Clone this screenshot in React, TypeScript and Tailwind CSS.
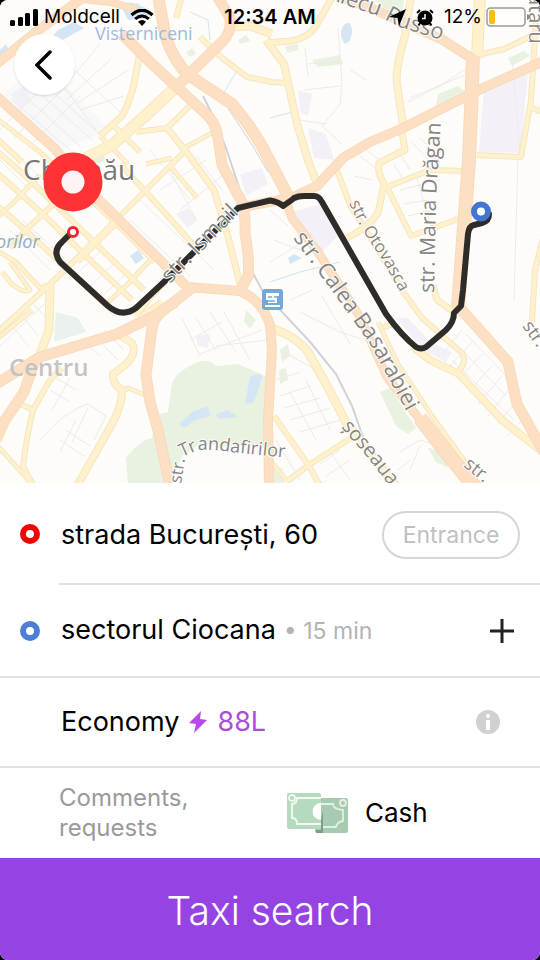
import type { ReactNode } from 'react';

/* ---------- map data ---------- */

type Road = { d: string; w: number };

const primaryRoads: Road[] = [
  { d: 'M-6 66 L36 32 L77 2 L86 -6', w: 9 },
  { d: 'M72 -2 L110 2 L138 10', w: 7 },
  { d: 'M122 34 L150 62 L180 90 L204 112 Q216 122 218 138 L222 165 L238 195 Q246 205 245 233 Q250 262 248 276 L240 291', w: 10 },
  { d: 'M158 -4 L163 22 Q166 50 187 74 L232 104 Q248 122 263 148 L288 196', w: 11 },
  { d: 'M217 -4 L230 18 Q232 32 222 42 L177 86', w: 10 },
  { d: 'M-4 96 L55 149 L97 198 L160 260 L187 287 L240 291 Q262 300 270 325 L272 350 L268 420 L269 486', w: 9 },
  { d: 'M192 288 L160 313 L117 334 L40 357 L-4 384', w: 10 },
  { d: 'M36 358 L24 392 L4 422 L-4 440', w: 10 },
  { d: 'M176 302 Q155 312 152 328 L146 375 L150 402 L158 430 L170 486', w: 10 },
  { d: 'M284 196 L292 218 L318 252 L360 317 L387 377 L420 420 L443 450 L478 486', w: 8 },
  { d: 'M420 418 L443 448 L474 486', w: 14 },
  { d: 'M473 56 L471 110 L469 160 L458 308', w: 13 },
  { d: 'M458 306 L478 328 L508 362 Q512 382 517 404 L544 452', w: 10 },
  { d: 'M334 -6 L380 12 L443 40 L474 60', w: 9 },
  { d: 'M546 60 L483 88 L403 128 L370 142 L343 158 L317 186 L291 198 L243 207', w: 9 },
];

const secondaryRoads: Road[] = [
  { d: 'M175 88 L145 116 L112 145 L86 158', w: 11 },
  { d: 'M480 -4 L477 58', w: 11 },
  { d: 'M231 27 L250 26 L272 34', w: 8 },
  { d: 'M200 37 L222 58 L247 77 L272 82 L288 83', w: 5 },
  { d: 'M266 43 L290 41 Q310 38 317 24 L333 -4', w: 6 },
  { d: 'M182 -4 L176 18', w: 5 },
  { d: 'M266 40 L284 64 L297 124 L308 160 L317 184', w: 7 },
  { d: 'M411 -4 L405 36 Q395 70 397 84 L403 125', w: 7 },
  { d: 'M402 132 L405 150 L379 163 Q377 172 384 184 L378 213 Q368 228 347 238', w: 6 },
  { d: 'M387 187 L430 170 L464 171', w: 5 },
  { d: 'M387 187 L411 236 L458 219', w: 5 },
  { d: 'M337 170 L350 205 L378 250 L404 293 L422 318 L462 353 Q468 362 457 373', w: 5 },
  { d: 'M433 285 L437 300 L454 312', w: 6 },
  { d: 'M383 327 L394 324', w: 5 },
  { d: 'M412 346 L430 360 L459 374 L503 421 L544 453', w: 7 },
  { d: 'M378 322 L398 364 L432 416 L474 474', w: 4 },
  { d: 'M270 328 Q295 335 308 352 L326 384 L347 424 L396 486', w: 8 },
  { d: 'M274 416 L309 466 L320 486', w: 5 },
  { d: 'M286 482 L309 465 L351 438', w: 5 },
  { d: 'M270 460 L286 480', w: 4 },
  { d: 'M482 54 L504 49 L544 30', w: 5 },
  { d: 'M536 20 L531 100 L521 157 L477 155', w: 5 },
  { d: 'M530 107 L544 113', w: 5 },
  { d: 'M544 234 L535 270 L532 322', w: 5 },
  { d: 'M140 53 L133 88 Q128 106 122 116 L100 136', w: 6 },
  { d: 'M-4 138 L22 162', w: 5 },
  { d: 'M100 136 L128 164', w: 4 },
  { d: 'M112 124 L140 152', w: 5 },
  { d: 'M136 132 L167 128 L192 104', w: 5 },
  { d: 'M167 128 L188 154 L214 190 L227 233 L240 284', w: 6 },
  { d: 'M184 148 L212 133', w: 4 },
  { d: 'M186 150 L133 203 L84 252 L50 284 L-4 334', w: 5 },
  { d: 'M146 164 L172 158', w: 4 },
  { d: 'M184 152 L170 166 L197 198', w: 4 },
  { d: 'M120 164 L156 203 L198 250', w: 5 },
  { d: 'M-4 118 L40 152 L118 226 L154 262', w: 4 },
  { d: 'M-4 150 L30 180 L100 248 L144 290', w: 5 },
  { d: 'M-4 172 L44 215 L92 262 L132 300', w: 5 },
  { d: 'M-4 205 L12 218 L60 262 L114 312', w: 5 },
  { d: 'M40 175 L14 202 L-4 218', w: 4 },
  { d: 'M62 196 L30 226 L10 248', w: 5 },
  { d: 'M118 222 L96 244 L78 262', w: 4 },
  { d: 'M152 258 L128 284 L106 304', w: 4 },
  { d: 'M172 274 L150 298 L136 316', w: 5 },
  { d: 'M-4 250 L16 262 L40 288 L50 284', w: 4 },
  { d: 'M10 262 L30 290 Q24 294 12 284 L2 272', w: 4 },
  { d: 'M50 284 L49 330 L40 354', w: 8 },
  { d: 'M32 310 L-4 340', w: 4 },
  { d: 'M142 316 L162 302', w: 6 },
  { d: 'M117 333 L132 343 Q138 354 124 366 L113 374 Q112 384 122 390 Q122 406 112 424 L77 486', w: 7 },
  { d: 'M123 391 L128 388 L145 395', w: 4 },
  { d: 'M62 368 L50 380 L33 410 Q26 440 23 467 L34 486', w: 5 },
  { d: 'M20 404 L34 410', w: 5 },
  { d: 'M-4 444 L34 486', w: 4 },
];

const minorRoads = [
  'M60 92 L100 44 M66 100 L110 60 M76 104 L128 70 M80 110 L124 96 M70 66 L120 112 M62 84 L96 130',
  'M12 100 L70 150 M20 92 L80 146 M30 84 L92 140 M40 80 L104 138 M0 130 L60 70 M14 138 L68 84 M28 148 L80 96',
  'M0 160 L30 190 M22 160 L70 205 M150 150 L190 200 M196 156 L222 190 M160 190 L206 160 M180 210 L222 176 M170 170 L196 220 M140 200 L214 270 M130 220 L190 276',
  'M10 230 L50 270 M22 220 L64 258 M70 280 L104 248 M84 292 L118 260 M96 302 L130 270 M60 272 L90 240',
  'M0 326 L40 290 M0 346 L44 304 M8 320 L28 346 M18 310 L38 336 M30 300 L46 318 M84 342 L100 356 M96 338 L118 360 M104 330 L124 350',
  'M56 378 L76 390 M50 390 L70 402 M70 378 L52 410 M40 440 Q66 410 88 404 M88 404 L106 416 L94 440 M60 440 L84 456 M66 430 L90 446 M76 420 L60 452 M88 408 L72 442',
  'M182 318 L200 356 M196 318 L216 350 M210 312 L236 352 M224 312 L250 360 M190 340 L222 322 M200 354 L262 330 M216 346 L268 340',
  'M276 380 L300 372 M280 396 L310 386 M284 408 L320 398 M290 420 L330 408 M300 432 L340 420 M290 392 L316 440 M306 380 L330 430 M280 350 L320 372 M276 440 L300 480',
  'M320 464 L340 450 M326 476 L350 460 M330 452 L350 480',
  'M305 48 L308 76 M338 28 L342 84 L340 104 L322 126 L342 144 M350 70 L366 80 M304 90 L340 86 M300 120 L326 124 M308 64 L340 62',
  'M408 102 L440 86 L470 66 M410 98 L472 72 M396 148 L410 170 M412 142 L434 166 M420 138 L438 156 M354 176 L372 180 M360 156 L378 170 M366 150 L380 160',
  'M400 190 L440 180 M404 204 L428 200 M408 216 L432 210 M394 164 L402 178 M416 176 L430 222 M518 158 L514 300 M512 60 L520 150',
  'M270 262 L310 238 M290 300 L312 290 M300 312 L340 332 L366 340 M322 296 L350 344 M270 210 L288 226 M274 240 L300 250',
  'M462 330 L444 352 M472 342 L450 366 M482 354 L458 380 M492 366 L468 392 M502 376 L478 404 M510 388 L488 416 M514 404 L498 424 M524 418 L508 436 M466 334 L510 380 M458 346 L506 396 M452 360 L514 420',
  'M400 452 L420 440 L440 446 M410 460 L398 470 M420 446 L410 470',
];

const parks = [
  'M172 384 Q176 372 190 366 Q206 356 216 366 L238 364 L270 378 L268 448 L200 444 L182 456 L170 486 L128 486 L126 458 Q140 440 152 438 L160 414 L168 412 Z',
  'M246 310 L256 320 L250 328 L244 322 Z',
  'M312 60 L340 55 L343 64 L318 67 Z',
  'M285 46 L298 44 L298 50 L287 53 Z',
  'M412 122 L436 106 L438 94 L458 86 L466 92 L440 104 Z',
  'M508 58 L524 51 L530 56 L512 66 Z',
  'M380 392 L390 388 L416 428 L408 434 L396 426 Z',
  'M280 350 L288 344 L290 356 L282 362 Z M279 370 L286 368 L288 380 L280 384 Z',
  'M270 470 L282 468 L284 483 L272 483 Z',
  'M428 448 L444 452 L448 468 L436 462 Z',
  'M186 52 L192 48 L196 54 L190 57 Z M238 40 L246 35 L250 41 L240 44 Z',
  'M88 156 L102 150 L106 160 L94 166 Z',
  'M374 0 L404 0 L402 14 L384 8 Z',
];

const blocks = [
  'M484 88 L528 74 L520 153 L479 152 Z',
  'M298 90 L312 94 L308 116 L300 112 Z M308 128 L326 134 L334 160 L314 158 Z',
  'M292 212 L322 204 L342 232 L322 252 Z',
  'M176 214 L188 208 L198 220 L188 228 Z M240 174 L262 168 L268 184 L246 196 Z',
  'M396 318 L408 318 L430 342 L452 352 L446 362 L424 350 Z',
  'M10 94 L24 86 L32 100 L20 110 Z M196 336 L210 334 L208 348 L198 346 Z',
];

const water = [
  'M250 376 L261 374 L262 378 L254 402 L245 404 Z',
  'M179 424 L192 412 L208 406 L210 416 L196 420 L184 428 Z',
  'M216 414 L228 410 L238 417 L218 419 Z',
  'M343 26 Q350 18 352 30 Q352 42 345 44 Q338 36 343 26 Z',
  'M288 258 L294 254 L302 258 L290 264 Z',
  'M0 50 L6 44 L10 52 L0 60 Z',
  'M58 30 L74 22 L84 28 L52 46 L44 46 Z',
  'M130 256 L138 250 L144 258 L136 264 Z',
  'M122 8 L130 2 L146 8 L150 18 L128 20 Z',
];

type LabelProps = { path: string; id: string; size: number; children: ReactNode };

function StreetLabel({ path, id, size, children }: LabelProps) {
  return (
    <>
      <path id={id} d={path} fill="none" />
      <text
        fontSize={size}
        fill="#858585"
        stroke="#fffdfa"
        strokeWidth={2}
        strokeLinejoin="round"
        paintOrder="stroke"
      >
        <textPath href={'#' + id}>{children}</textPath>
      </text>
    </>
  );
}

function RouteMap() {
  return (
    <svg
      viewBox="0 0 540 483"
      preserveAspectRatio="xMidYMid slice"
      className="absolute inset-0 h-full w-full font-['Open_Sans','Noto_Sans',sans-serif]"
      role="img"
      aria-label="Route map"
    >
      <rect width="540" height="483" fill="#fefcf9" />
      <path d="M-2 100 L40 60 L110 130 L60 150 Z" fill="#f9f8f8" />
      <path d="M56 312 L78 318 L86 332 L54 342 Z" fill="#eaf1ee" />
      {parks.map((d) => (
        <path key={d} d={d} fill="#e9f2e0" />
      ))}
      {blocks.map((d) => (
        <path key={d} d={d} fill="#f3f1f7" />
      ))}
      {water.map((d) => (
        <path key={d} d={d} fill="#d5e5f5" />
      ))}
      <g fill="none" stroke="#ebebeb" strokeWidth={1}>
        {minorRoads.map((d) => (
          <path key={d} d={d} />
        ))}
      </g>
      <g fill="none" stroke="#d4e3ee" strokeWidth={1}>
        <path d="M96 0 Q120 6 140 4 M190 12 L208 20 L210 40 M236 72 L222 96 M270 118 L292 112 M270 282 L300 272 L340 262" />
      </g>
      <g fill="none" stroke="#cfd2d8" strokeWidth={2}>
        <path d="M203 96 L214 118 L226 148 L236 178 L243 200 L246 260 L262 290 L284 314 L311 343 L336 374 L352 406 L364 440" />
        <path d="M228 108 L254 148 L268 172" strokeWidth={1} />
      </g>
      <g fill="none" strokeLinejoin="round">
        {secondaryRoads.map((r) => (
          <path key={r.d} d={r.d} stroke="#f5e5c3" strokeWidth={r.w + 1} />
        ))}
        {secondaryRoads.map((r) => (
          <path key={r.d} d={r.d} stroke="#fef1cc" strokeWidth={r.w - 1} />
        ))}
        {primaryRoads.map((r) => (
          <path key={r.d} d={r.d} stroke="#f8d9bb" strokeWidth={r.w + 1} />
        ))}
        {primaryRoads.map((r) => (
          <path key={r.d} d={r.d} stroke="#fde0c3" strokeWidth={r.w - 1} />
        ))}
      </g>
      <path
        d="M73 231 L62 242 Q52 251 60 262 L108 306 Q122 318 136 308 L165 281 L238 208 L270 200.500 Q279 202 283 206 Q292 200 294 198 Q298 196 304 196 L314 196 Q319 196 322 202 L346 244 L386 314 Q402 336 416 347 Q421 350 426 347 L446 330 Q454 322 454 313 L461 306 L463 290 L468 234 Q469 226 474 225 L482 223 Q489 221 489 214"
        fill="none"
        stroke="#2e2b29"
        strokeWidth={6}
        strokeLinecap="round"
        strokeLinejoin="round"
      />
      <text x="23" y="180" fontSize="28" fill="#777777" stroke="#fffdfa" strokeWidth={2} paintOrder="stroke">
        Chișinău
      </text>
      <text x="95" y="40" fontSize="18" fill="#9dbbe0">
        Visterniceni
      </text>
      <text x="-4" y="248" fontSize="18" fontStyle="italic" fill="#8ea9c8">
        orilor
      </text>
      <text x="9" y="376" fontSize="24" fontWeight="600" fill="#c3c2c6">
        Centru
      </text>
      <StreetLabel id="ismail" size={22} path="M170 284 L260 192">str. Ismail</StreetLabel>
      <StreetLabel id="dragan" size={21} path="M434 293 L436 200 L443 90">str. Maria Drăgan</StreetLabel>
      <StreetLabel id="otovasca" size={17} path="M349 203 Q362 232 380 256 L420 328">str. Otovasca</StreetLabel>
      <StreetLabel id="calea" size={22} path="M293 238 L330 288 L370 344 L410 418 L430 455">str. Calea Basarabiei</StreetLabel>
      <StreetLabel id="trandafirilor-str" size={17} path="M181 484 L188 440">str.</StreetLabel>
      <StreetLabel id="trandafirilor" size={18} path="M182 457 L198 450 Q214 449 230 452 L310 460">
        Trandafirilor
      </StreetLabel>
      <StreetLabel id="russo" size={22} path="M326 -2 L378 16 L400 27 L460 46">Alecu Russo</StreetLabel>
      <StreetLabel id="soseaua" size={20} path="M341 427 L368 458 L410 512">șoseaua</StreetLabel>
      <StreetLabel id="str-south" size={18} path="M463 466 L500 496">str.</StreetLabel>
      <StreetLabel id="str-east" size={18} path="M522 326 L550 366">str.</StreetLabel>
      <StreetLabel id="ataru" size={20} path="M529 -6 L529 60">ătaru</StreetLabel>
      <g>
        <rect x="262" y="289" width="21" height="21" rx="3" fill="#74a8dc" />
        <path d="M266 293 H279 V296 H277 V303 H268 V300 H266 Z" fill="#ffffff" />
        <path d="M265 306 H280" stroke="#ffffff" strokeWidth={2} />
        <path d="M268 297 H272 M274 297 H277 M268 301 H275" stroke="#74a8dc" strokeWidth={1.5} />
      </g>
      <circle cx="73" cy="182" r="20.500" fill="#fff3f3" stroke="#ff3336" strokeWidth={18} />
      <circle cx="73" cy="232" r="4.500" fill="#ffffff" stroke="#ec2531" strokeWidth={3} />
      <circle cx="481" cy="211.500" r="7" fill="#ffffff" stroke="#4276d0" strokeWidth={6} />
    </svg>
  );
}

/* ---------- icons ---------- */

function SignalIcon() {
  return (
    <svg width="28" height="17" viewBox="0 0 28 17" aria-hidden="true">
      <rect x="0" y="11" width="5" height="6" rx="1.500" />
      <rect x="8" y="8" width="5" height="9" rx="1.500" />
      <rect x="15" y="4" width="5" height="13" rx="1.500" />
      <rect x="23" y="0" width="5" height="17" rx="1.500" />
    </svg>
  );
}

function WifiIcon() {
  return (
    <svg width="24" height="17" viewBox="0 0 24 17" aria-hidden="true">
      <path d="M1.500 6 Q12 -3.500 22.500 6" fill="none" stroke="#000" strokeWidth="3.200" />
      <path d="M5.200 10 Q12 4 18.800 10" fill="none" stroke="#000" strokeWidth="3" />
      <path d="M8 12.800 Q12 9.400 16 12.800 L12 17 Z" />
    </svg>
  );
}

function LocationIcon() {
  return (
    <svg width="17" height="17" viewBox="0 0 17 17" aria-hidden="true">
      <path d="M17 0 L10 17 L8.500 9 L0 8 Z" />
    </svg>
  );
}

function AlarmIcon() {
  return (
    <svg width="18" height="17" viewBox="0 0 18 17" aria-hidden="true">
      <circle cx="9" cy="9" r="7.500" />
      <path d="M1 4 L4 1 M17 4 L14 1 M4 14 L2.500 16.500 M14 14 L15.500 16.500" stroke="#000" strokeWidth="1.800" />
      <path d="M9 5 V9.500 H6" fill="none" stroke="#fff" strokeWidth="1.500" />
    </svg>
  );
}

function BatteryIcon() {
  return (
    <svg width="44" height="20" viewBox="0 0 44 20" aria-hidden="true">
      <rect x="1" y="1" width="38" height="18" rx="3.500" fill="#ffffff" fillOpacity="0.600" stroke="#9a9a98" strokeWidth="1.500" />
      <rect x="3" y="3" width="6" height="14" rx="2" fill="#f8be0c" />
      <path d="M41 7 Q44 8 44 10 Q44 12 41 13 Z" fill="#8a8a88" />
    </svg>
  );
}

function CashIcon() {
  return (
    <svg width="62" height="40" viewBox="0 0 62 40" aria-hidden="true">
      <rect x="28" y="5" width="33" height="35" rx="2" fill="#a6cbb1" />
      <rect x="0" y="0" width="34" height="36" rx="2" fill="#b5dabd" />
      <path d="M34 5 H10 Q10 11 5 11 V25 Q10 25 10 31 H34" fill="none" stroke="#f3faf3" strokeWidth="1.800" />
      <path d="M34 11 H46 Q46 16 56 17 V28 Q50 29 49 34 H34" fill="none" stroke="#e3f0e5" strokeWidth="1.800" />
      <path d="M34 10 A8 8 0 0 0 34 27 Z" fill="#ffffff" />
      <circle cx="5" cy="5" r="3" fill="#b5dabd" stroke="#f3faf3" strokeWidth="1.800" />
      <circle cx="56" cy="10" r="3" fill="#a6cbb1" stroke="#e3f0e5" strokeWidth="1.800" />
      <path d="M34 5 V27 L36 18 V40 H29 V37 H34 Z" fill="#7d9f88" />
    </svg>
  );
}

function Ring({ red }: { red?: boolean }) {
  return (
    <span
      className={
        red
          ? 'block size-5 shrink-0 rounded-full border-[6px] border-[#f00404]'
          : 'block size-5 shrink-0 rounded-full border-[6px] border-[#4d7fd6]'
      }
    />
  );
}

/* ---------- screen ---------- */

export default function App() {
  return (
    <div className="min-h-screen bg-black font-['Inter','Liberation_Sans',sans-serif] text-black">
      <div className="flex min-h-screen flex-col overflow-hidden rounded-lg bg-white">
        <section className="relative min-h-80 flex-1">
          <RouteMap />
          <header className="absolute inset-x-0 top-0">
            <div className="grid h-[34px] grid-cols-[1fr_auto_1fr] items-center px-2.5 text-[19px] leading-6">
              <div className="flex items-center gap-1.5">
                <SignalIcon />
                <span>Moldcell</span>
                <span className="pl-1">
                  <WifiIcon />
                </span>
              </div>
              <time className="text-[20px] font-semibold">12:34 AM</time>
              <div className="flex items-center justify-end gap-1">
                <LocationIcon />
                <span className="px-1.5">
                  <AlarmIcon />
                </span>
                <span>12%</span>
                <BatteryIcon />
              </div>
            </div>
            <button
              type="button"
              aria-label="Back"
              className="ml-3.5 flex size-[61px] items-center justify-center rounded-full bg-white shadow-sm"
            >
              <svg width="20" height="30" viewBox="0 0 20 30" fill="none" stroke="#000" strokeWidth="3.500" aria-hidden="true">
                <path d="M15 2 L2 15 L15 28" strokeLinecap="round" />
              </svg>
            </button>
          </header>
        </section>

        <main>
          <div className="flex h-[102px] items-center pl-5">
            <Ring red />
            <div className="ml-[19px] flex h-full flex-1 items-center border-b-2 border-[#e2e2e2] pt-1 pr-5 pl-0.5">
              <button type="button" className="flex-1 text-left text-[27px] leading-8">
                strada București, 60
              </button>
              <button
                type="button"
                className="h-12 w-[138px] rounded-full border-2 border-[#d6d6d6] text-[23px] leading-7 text-[#c0c0c0]"
              >
                Entrance
              </button>
            </div>
          </div>

          <div className="flex h-[93px] items-center border-b-2 border-[#e2e2e2] pr-[26px] pl-5">
            <Ring />
            <button type="button" className="ml-[21px] flex flex-1 items-baseline text-left text-[27px] leading-8">
              sectorul Ciocana
              <span className="ml-2 text-[23px] text-[#b3b3b3]">• 15 min</span>
            </button>
            <button type="button" aria-label="Add stop" className="flex size-6 items-center justify-center">
              <svg width="24" height="24" viewBox="0 0 24 24" stroke="#222" strokeWidth="3" aria-hidden="true">
                <path d="M12 0 V24 M0 12 H24" />
              </svg>
            </button>
          </div>

          <div className="flex h-[90px] items-center border-b-2 border-[#e2e2e2] pr-10 pl-[61px]">
            <button type="button" className="flex flex-1 items-center text-left text-[27px] leading-8">
              Economy
              <svg className="mr-2.5 ml-2.5" width="18" height="22" viewBox="0 0 18 22" fill="#b548ee" aria-hidden="true">
                <path d="M12 0 L0 12 L7 13 L5 22 L18 9 L11 8 Z" />
              </svg>
              <span className="text-[#a94fd6]">88L</span>
            </button>
            <button type="button" aria-label="Tariff details">
              <svg width="24" height="24" viewBox="0 0 24 24" aria-hidden="true">
                <circle cx="12" cy="12" r="12" fill="#d1d1d1" />
                <circle cx="12" cy="6" r="2" fill="#fff" />
                <rect x="10" y="10" width="4" height="10" fill="#fff" />
              </svg>
            </button>
          </div>

          <div className="flex h-[90px] items-center pl-[59px]">
            <textarea
              aria-label="Comments, requests"
              placeholder="Comments, requests"
              rows={2}
              className="block w-[228px] resize-none overflow-hidden pr-20 text-[24px] leading-[30px] placeholder:text-[#9a9a9a] focus:outline-none"
            />
            <button type="button" className="flex items-center gap-4 text-[26px] leading-8">
              <CashIcon />
              Cash
            </button>
          </div>

          <button
            type="button"
            className="block h-[102px] w-full bg-[#9643e3] pt-1 text-[39px] leading-[48px] font-light text-white"
          >
            Taxi search
          </button>
        </main>
      </div>
    </div>
  );
}
